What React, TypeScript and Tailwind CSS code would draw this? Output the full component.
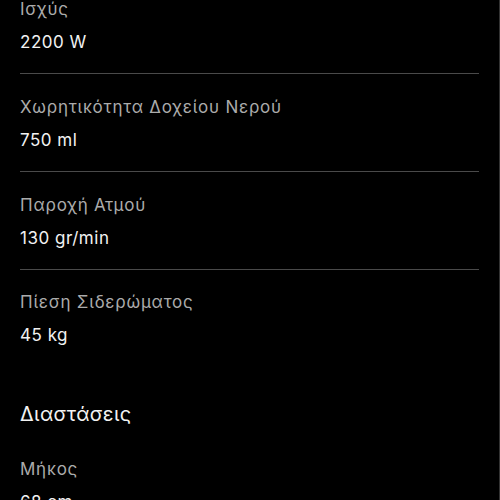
const specs = [
  { label: "Ισχύς", value: "2200 W" },
  { label: "Χωρητικότητα Δοχείου Νερού", value: "750 ml" },
  { label: "Παροχή Ατμού", value: "130 gr/min" },
  { label: "Πίεση Σιδερώματος", value: "45 kg", last: true },
];

function SpecRow({ label, value, last }: { label: string; value: string; last?: boolean }) {
  return (
    <div className={last ? "pt-[20px]" : "pt-[21px] pb-[19px] border-b border-[#4a4a4a]"}>
      <div className="text-[17px] leading-6 tracking-[0.045em] text-[#ababab] font-normal">{label}</div>
      <div className="mt-[9px] text-[17px] leading-6 tracking-[0.03em] text-[#f2f2f2] font-normal">{value}</div>
    </div>
  );
}

export default function App() {
  return (
    <div
      className="w-[500px] h-[500px] overflow-hidden bg-black border-r border-[#333]"
      style={{ fontFamily: "Inter, 'Noto Sans', sans-serif" }}
    >
      <div className="mt-[-24px] pl-5 pr-5">
        {specs.map((s) => (
          <SpecRow key={s.label} label={s.label} value={s.value} last={s.last} />
        ))}
        <h2 className="mt-[53px] text-[20px] leading-7 tracking-[0.02em] text-[#f2f2f2] font-normal">Διαστάσεις</h2>
        <div className="pt-[29px]">
          <div className="text-[17px] leading-6 tracking-[0.045em] text-[#ababab] font-normal">Μήκος</div>
          <div className="mt-[9px] text-[17px] leading-6 tracking-[0.03em] text-[#f2f2f2] font-normal">68 cm</div>
        </div>
      </div>
    </div>
  );
}
